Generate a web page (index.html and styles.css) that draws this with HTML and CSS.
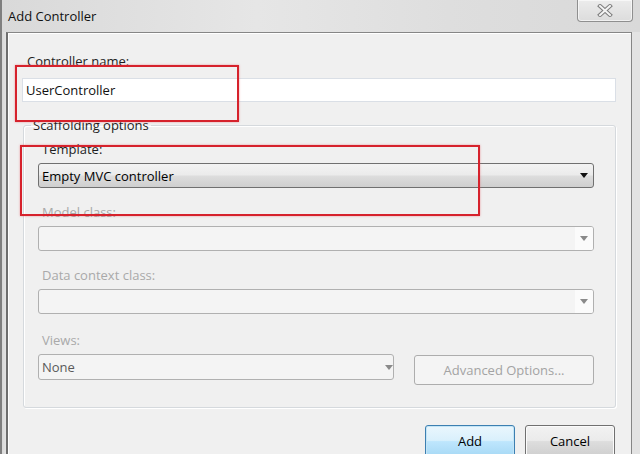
FILE: index.html
```html
<!DOCTYPE html>
<html>
<head>
<meta charset="utf-8">
<title>Add Controller</title>
<link rel="stylesheet" href="styles.css">
</head>
<body>
<div class="window">
  <div class="titlebar">
    <span class="title">Add Controller</span>
    <div class="close">
      <svg width="16" height="13" viewBox="0 0 16 13">
        <path d="M3 2 L13 11 M13 2 L3 11" stroke="#7c7c7c" stroke-width="4" stroke-linecap="square" fill="none"/>
        <path d="M3 2 L13 11 M13 2 L3 11" stroke="#f4f4f4" stroke-width="2" stroke-linecap="square" fill="none"/>
      </svg>
    </div>
  </div>
  <div class="content">
    <div class="lbl name-lbl">Controller name:</div>
    <div class="textbox">UserController</div>
    <fieldset class="group">
      <legend>Scaffolding options</legend>
      <div class="field">
        <div class="lbl">Template:</div>
        <div class="select active"><span>Empty MVC controller</span><span class="arrow"></span></div>
      </div>
      <div class="field">
        <div class="lbl disabled">Model class:</div>
        <div class="select off"><span></span><span class="btnpart"><span class="arrow gray"></span></span></div>
      </div>
      <div class="field">
        <div class="lbl disabled">Data context class:</div>
        <div class="select off"><span></span><span class="btnpart"><span class="arrow gray"></span></span></div>
      </div>
      <div class="field views">
        <div class="lbl disabled">Views:</div>
        <div class="row">
          <div class="select off views-sel"><span class="none">None</span><span class="arrow gray"></span></div>
          <div class="adv">Advanced Options...</div>
        </div>
      </div>
    </fieldset>
    <div class="buttons">
      <div class="btn add">Add</div>
      <div class="btn cancel">Cancel</div>
    </div>
  </div>
  <div class="mark mark1"></div>
  <div class="mark mark2"></div>
</div>
</body>
</html>
```
FILE: styles.css
```css
html, body {
  margin: 0;
  height: 100%;
  overflow: hidden;
}
body {
  background: #d8d8d8;
  font-family: "Open Sans", "Noto Sans", sans-serif;
  font-size: 13px;
  color: #1e1e1e;
}
.window {
  position: relative;
  width: 640px;
  height: 454px;
  box-sizing: border-box;
  padding: 0 8px 0 6px;
  background: linear-gradient(to right, #7f7f7f 0, #7f7f7f 2px, #d9d9d9 2px, #e3e3e3 6px);
  overflow: hidden;
}
.titlebar {
  height: 32px;
  display: flex;
  justify-content: space-between;
  align-items: flex-start;
  background: linear-gradient(to right, #d9d9d9, #e6e6e6 40%, #dedede 70%, #d9d9d9);
  margin-left: -4px;
  padding-left: 4px;
  margin-right: -8px;
  padding-right: 7px;
}
.title {
  margin-left: 2px;
  margin-top: 8px;
  line-height: 16px;
  color: #111;
}
.close {
  width: 56px;
  height: 22px;
  box-sizing: border-box;
  border: 1px solid #8f8f8f;
  border-top: none;
  border-radius: 0 0 4px 4px;
  background: linear-gradient(#ececec, #dcdcdc);
  display: flex;
  align-items: center;
  justify-content: center;
  box-shadow: inset 0 0 0 1px rgba(255,255,255,0.6);
}
.content {
  height: 422px;
  box-sizing: border-box;
  border: 1px solid #868686;
  border-left: 2px solid #6e6e6e;
  border-bottom: none;
  background: #f0f0f0;
  box-shadow: inset 1px 1px 0 #ffffff;
  padding: 20px 15px 0 14px;
}
.lbl {
  line-height: 16px;
  margin-left: 4px;
  margin-bottom: 6px;
}
.name-lbl {
  margin-left: 5px;
  margin-bottom: 9px;
}
.lbl.disabled {
  color: #a9a9a9;
}
.textbox {
  height: 24px;
  box-sizing: border-box;
  border: 1px solid #dadfe6;
  background: #fff;
  padding-left: 3px;
  line-height: 22px;
  color: #111;
}
.group {
  margin: 15px 0 0 1px;
  padding: 8px 21px 22px 14px;
  border: 1px solid #d5d9dd;
  border-radius: 3px;
  box-shadow: inset 1px 1px 0 #fff, 1px 1px 0 #fff;
}
.group legend {
  padding: 0 2px;
  margin-left: -7px;
  line-height: 16px;
  color: #1e1e1e;
}
.field + .field {
  margin-top: 16px;
}
.field.views {
  margin-top: 18px;
}
.select {
  height: 25px;
  box-sizing: border-box;
  border-radius: 3px;
  display: flex;
  align-items: center;
  justify-content: space-between;
  padding: 0 5px 0 3px;
}
.select.active {
  border: 1px solid #707070;
  background: linear-gradient(#f3f3f3, #ebebeb 48%, #dddddd 52%, #cfcfcf);
  color: #000;
}
.select.off {
  border: 1px solid #b0b0b0;
  background: #f4f4f4;
  padding-right: 0;
}
.btnpart {
  width: 18px;
  height: 23px;
  background: #fbfbfb;
  display: flex;
  align-items: center;
  justify-content: center;
  border-radius: 0 2px 2px 0;
}
.arrow {
  width: 0;
  height: 0;
  border-left: 4px solid transparent;
  border-right: 4px solid transparent;
  border-top: 5px solid #111;
}
.arrow.gray {
  border-top-color: #8a8a8a;
}
.row {
  display: flex;
  gap: 20px;
  align-items: flex-start;
}
.views-sel {
  width: 356px;
  height: 26px;
  padding-right: 5px;
}
.none {
  color: #5a5a5a;
}
.adv {
  width: 180px;
  height: 30px;
  box-sizing: border-box;
  margin-top: 1px;
  border: 1px solid #adadad;
  border-radius: 3px;
  background: #f4f4f4;
  color: #a3a3a3;
  display: flex;
  align-items: center;
  justify-content: center;
}
.buttons {
  display: flex;
  justify-content: flex-end;
  gap: 10px;
  margin-top: 17px;
  padding-right: 1px;
}
.btn {
  width: 90px;
  height: 32px;
  box-sizing: border-box;
  border-radius: 3px;
  display: flex;
  align-items: center;
  justify-content: center;
  color: #000;
}
.btn.add {
  border: 1px solid #3c7fb1;
  background: linear-gradient(#eaf6fd, #d9f0fc 48%, #bee6fd 52%, #a7d9f5);
  box-shadow: inset 0 0 0 1px #c4e5f6;
}
.btn.cancel {
  border: 1px solid #707070;
  background: linear-gradient(#f2f2f2, #ebebeb 48%, #dddddd 52%, #cfcfcf);
  box-shadow: inset 0 0 0 1px #fbfbfb;
}
.mark {
  position: absolute;
  box-sizing: border-box;
  border: 2px solid #d6222c;
  box-shadow: 0 0 2px rgba(230, 90, 100, 0.6);
}
.mark1 {
  left: 15px;
  top: 65px;
  width: 224px;
  height: 57px;
}
.mark2 {
  left: 20px;
  top: 145px;
  width: 460px;
  height: 71px;
}
```
